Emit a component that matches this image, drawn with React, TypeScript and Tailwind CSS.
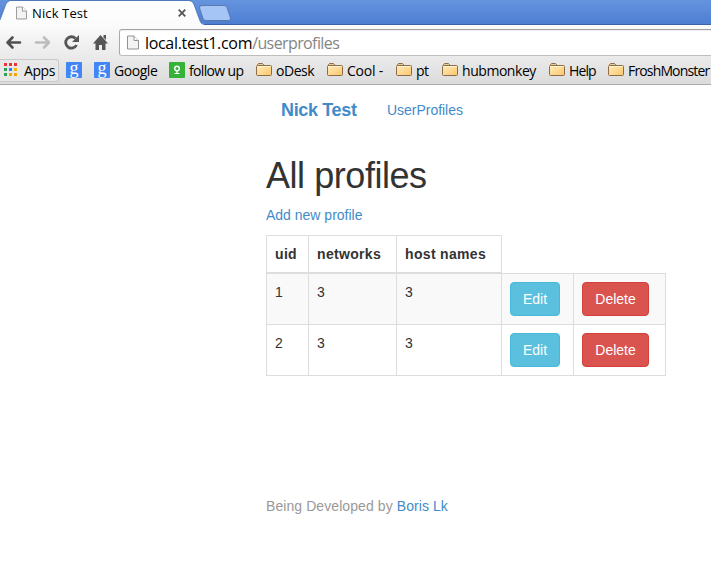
import React from "react";

const pageFont = "font-['Liberation_Sans',Arial,sans-serif]";
const chromeFont = "font-['Open_Sans','Noto_Sans',sans-serif]";

function PageIcon({ className }: { className: string }) {
  return (
    <svg viewBox="0 0 12 14" className={className} fill="none">
      <path d="M.5.5h6.5l4.5 4.5v8.5H.5z" fill="#f3f3f3" stroke="#929292" />
      <path d="M7 .5V5h4.5" fill="#fff" stroke="#929292" />
    </svg>
  );
}

function FolderIcon() {
  return (
    <svg viewBox="0 0 16 14" className="mb-[2px] h-[14px] w-4 shrink-0" fill="none">
      <defs>
        <linearGradient id="folder" x1="0" y1="0" x2="1" y2="1">
          <stop offset="0" stopColor="#ffedbb" />
          <stop offset="1" stopColor="#fbc56b" />
        </linearGradient>
      </defs>
      <path d="M1.5 3V1.5l1-1h4l1 1V3" fill="#e9cb8d" stroke="#8c6b48" />
      <path d="M.5 3.5q0-1 1-1h13q1 0 1 1v8q0 1-1 1h-13q-1 0-1-1z" fill="url(#folder)" stroke="#8c6b48" />
      <path d="M1.5 3.5h13" stroke="#fff5d5" />
    </svg>
  );
}

function GoogleIcon() {
  return (
    <span className="mb-px flex h-4 w-4 shrink-0 items-center justify-center rounded-[1px] bg-[#4285f4] pb-[5px] font-['Liberation_Serif',serif] text-[18px] leading-none tracking-normal text-white">
      g
    </span>
  );
}

const appColors = ["#ea3535", "#ea3535", "#ea3535", "#2f9e59", "#2684fc", "#f5b400", "#2f9e59", "#f5a400", "#f5a400"];

function TabStrip() {
  return (
    <div className="relative h-[25px] border-b border-[#3c62aa] bg-linear-to-b from-[#6594df] to-[#4d7ed1]">
      <svg className="absolute top-0 left-0 h-[26px] w-[240px]" viewBox="0 0 240 26" fill="none">
        <defs>
          <linearGradient id="tab" x1="0" y1="0" x2="0" y2="1">
            <stop offset="0" stopColor="#fff" />
            <stop offset="1" stopColor="#fbfbfb" />
          </linearGradient>
        </defs>
        <path d="M0 26V20L6 4Q7.5 1 10 1H189Q192 1 193.5 4L200 21Q201 24 204 24V26Z" fill="url(#tab)" />
        <path d="M0 20L6 4Q7.500 1 10 .5H189Q192 .5 193.500 3L200 21Q201 24.500 204 24.500" stroke="#426bab" strokeOpacity=".65" />
        <path d="M202 5.500H224Q226 5.500 227 7.500L230.500 18Q231 20.500 228.500 20.500H206Q204 20.500 203 18.500L199.500 8Q199 5.500 202 5.500Z" fill="#a4c5f5" stroke="#5879ae" />
      </svg>
      <div className="relative flex h-[25px] items-center">
        <PageIcon className="ml-4 h-[14px] w-[11px]" />
        <span className="ml-[5px] w-[146px] text-[13px] leading-5 tracking-[0.12px]">Nick Test</span>
        <svg viewBox="0 0 8 8" className="mt-px h-2 w-2" stroke="#555" strokeWidth="1.8">
          <path d="m.7.7 6.600 6.600M7.300.7.7 7.300" />
        </svg>
      </div>
    </div>
  );
}

function AddressBar() {
  return (
    <div className="flex h-[32px] items-start">
      <svg viewBox="0 0 115 32" className="h-8 w-[115px] shrink-0" fill="none">
        <path d="M7.500 17.500H20M12.500 12.500l-5 5 5 5" stroke="#505050" strokeWidth="2.600" strokeLinecap="round" strokeLinejoin="round" />
        <path d="M36 17.500H49M44 12.500l5 5-5 5" stroke="#bdbdbd" strokeWidth="2.600" strokeLinecap="round" strokeLinejoin="round" />
        <path d="M75.500 13.500A5.700 5.700 0 1 0 76.500 20" stroke="#565656" strokeWidth="2.800" />
        <path d="M79 10v7h-7z" fill="#565656" />
        <path d="M93 18.500 100.500 10l7.500 8.500h-2.500V25h-3.500v-5h-3v5h-3.500v-6.500z" fill="#565656" />
        <path d="M103.500 10h2.500v5l-2.500-2.500z" fill="#565656" />
      </svg>
      <div className="ml-1 mt-[4px] flex h-[27px] flex-1 items-center rounded-l-[3px] border-y border-l border-t-[#a3a3a3] border-b-[#bdbdbd] border-l-[#aaa] bg-white shadow-[inset_0_1px_1px_#eee]">
        <PageIcon className="ml-[7px] h-[15px] w-3" />
        <span className="ml-[6px] text-[16px] leading-6 tracking-[-0.32px] text-black">
          local.test1.com<span className="tracking-[-0.6px] text-[#858585]">/userprofiles</span>
        </span>
      </div>
    </div>
  );
}

function Folder({ label, width, spacing = "" }: { label: string; width: string; spacing?: string }) {
  return (
    <div className={"flex shrink-0 items-center " + width}>
      <FolderIcon />
      <span className={"ml-[4px] " + spacing}>{label}</span>
    </div>
  );
}

function BookmarkBar() {
  return (
    <div className="flex h-[27px] items-center whitespace-nowrap text-[14px] leading-5 tracking-[-0.45px]">
      <div className="flex h-[23px] w-[59px] shrink-0 items-center rounded-r-[3px] border border-l-0 border-[#c9c9c9] bg-[#e8e8e8]">
        <svg viewBox="0 0 13 13" className="mb-[2px] ml-1 h-[13px] w-[13px]">
          {appColors.map((color, i) => (
            <rect key={i} x={(i % 3) * 5} y={Math.floor(i / 3) * 5} width="3" height="3" fill={color} />
          ))}
        </svg>
        <span className="ml-[7px]">Apps</span>
      </div>
      <div className="ml-[7px] w-7 shrink-0"><GoogleIcon /></div>
      <div className="flex w-[75px] shrink-0 items-center"><GoogleIcon /><span className="ml-1">Google</span></div>
      <div className="flex w-[87px] shrink-0 items-center">
        <svg viewBox="0 0 16 16" className="mb-px h-4 w-4" fill="none">
          <rect width="16" height="16" rx="1" fill="#36b13a" />
          <circle cx="8" cy="6.500" r="2.300" stroke="white" strokeWidth="1.400" />
          <path d="M8 8.500v3M5.500 11.500h5" stroke="white" strokeWidth="1.200" />
        </svg>
        <span className="ml-1 tracking-[-0.65px]">follow up</span>
      </div>
      <Folder label="oDesk" width="w-[71px]" />
      <Folder label="Cool -" width="w-[69px]" spacing="tracking-[-0.2px]" />
      <Folder label="pt" width="w-[46px]" />
      <Folder label="hubmonkey" width="w-[107px]" />
      <Folder label="Help" width="w-[59px]" spacing="tracking-[-0.9px]" />
      <Folder label="FroshMonster" width="w-[103px]" spacing="tracking-[-0.85px]" />
    </div>
  );
}

const rows = [
  { uid: 1, networks: 3, hosts: 3, background: "bg-[#f9f9f9]" },
  { uid: 2, networks: 3, hosts: 3, background: "bg-white" },
];

const cell = "border border-[#ddd] p-2 align-top";
const head = "border border-b-2 border-[#ddd] p-2 text-left align-bottom font-bold tracking-[0.33px]";
const button = "block h-[34px] rounded-[4px] border text-center text-[14px] leading-5 text-white";

export default function App() {
  return (
    <div className={"h-[566px] w-[711px] overflow-hidden bg-white text-[14px] leading-5 text-[#333] " + pageFont}>
      <header className={"text-black " + chromeFont}>
        <TabStrip />
        <div className="h-[60px] border-b border-[#aaa] bg-linear-to-b from-[#fbfbfb] to-[#dcdcdc]">
          <AddressBar />
          <BookmarkBar />
        </div>
      </header>
      <main className="ml-[266px] w-[400px]">
        <nav className="flex h-[50px] items-center text-[#428bca]">
          <a className="ml-[15px] w-[106px] text-[18px] font-bold tracking-[-0.35px]">Nick Test</a>
          <a className="tracking-[-0.03px]">UserProfiles</a>
        </nav>
        <h1 className="mt-[21px] text-[36px] leading-10 font-normal tracking-[-0.45px]">All profiles</h1>
        <a className="mt-[9px] block text-[#428bca]">Add new profile</a>
        <table className="mt-[10px] w-[400px] table-fixed border-collapse">
          <colgroup>
            <col className="w-[42px]" />
            <col className="w-[88px]" />
            <col className="w-[105px]" />
            <col className="w-[72px]" />
            <col className="w-[92px]" />
          </colgroup>
          <thead>
            <tr>
              <th className={head}>uid</th>
              <th className={head}>networks</th>
              <th className={head}>host names</th>
            </tr>
          </thead>
          <tbody>
            {rows.map((row) => (
              <tr key={row.uid} className={row.background}>
                <td className={cell}>{row.uid}</td>
                <td className={cell}>{row.networks}</td>
                <td className={cell}>{row.hosts}</td>
                <td className={cell}>
                  <button className={button + " w-[50px] border-[#46b8da] bg-[#5bc0de]"}>Edit</button>
                </td>
                <td className={cell}>
                  <button className={button + " w-[67px] border-[#d43f3a] bg-[#d9534f]"}>Delete</button>
                </td>
              </tr>
            ))}
          </tbody>
        </table>
        <footer className="mt-[120px] tracking-[0.08px] text-[#999]">
          Being Developed by <a className="text-[#428bca]">Boris Lk</a>
        </footer>
      </main>
    </div>
  );
}
